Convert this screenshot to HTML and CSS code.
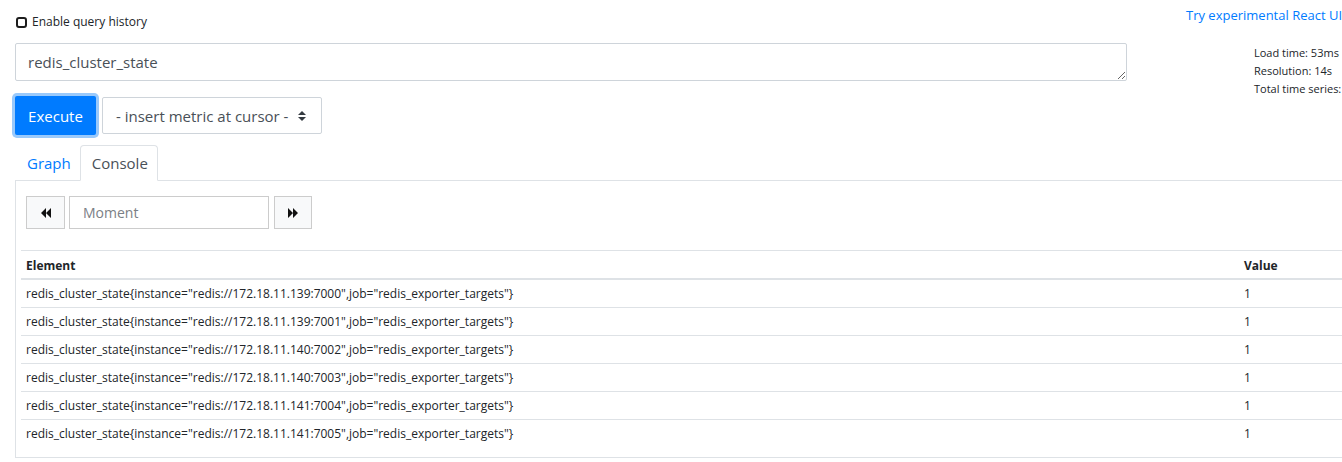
FILE: index.html
```html
<!DOCTYPE html>
<html>
<head>
<meta charset="utf-8">
<link rel="stylesheet" href="styles.css">
</head>
<body>
<div class="page">
  <div class="top">
    <label class="history"><span class="cb"></span>Enable query history</label>
    <a class="react" href="#">Try experimental React UI</a>
  </div>
  <div class="query-row">
    <textarea class="expr">redis_cluster_state</textarea>
    <div class="stats">
      <div>Load time: 53ms</div>
      <div>Resolution: 14s</div>
      <div>Total time series:</div>
    </div>
  </div>
  <div class="exec-row">
    <button class="execute">Execute</button>
    <div class="select">
      <span>- insert metric at cursor -</span>
      <svg class="sel-arrow" width="8" height="10" viewBox="0 0 8 10"><path d="M4 0 L8 4 H0 Z M0 6 H8 L4 10 Z" fill="#343a40"/></svg>
    </div>
  </div>
  <div class="tabs">
    <a class="tab" href="#">Graph</a>
    <a class="tab active" href="#">Console</a>
  </div>
  <div class="pane">
    <div class="controls">
      <button class="nav-btn">
        <svg width="10" height="10" viewBox="0 0 10 10"><path d="M5 0 V10 L0 5 Z M10 0 V10 L5 5 Z" fill="#111"/></svg>
      </button>
      <div class="moment">Moment</div>
      <button class="nav-btn fwd">
        <svg width="10" height="10" viewBox="0 0 10 10"><path d="M0 0 V10 L5 5 Z M5 0 V10 L10 5 Z" fill="#111"/></svg>
      </button>
    </div>
    <table class="results">
      <colgroup><col class="c-el"><col class="c-val"></colgroup>
      <thead><tr><th>Element</th><th>Value</th></tr></thead>
      <tbody>
        <tr><td>redis_cluster_state{instance="redis://172.18.11.139:7000",job="redis_exporter_targets"}</td><td>1</td></tr>
        <tr><td>redis_cluster_state{instance="redis://172.18.11.139:7001",job="redis_exporter_targets"}</td><td>1</td></tr>
        <tr><td>redis_cluster_state{instance="redis://172.18.11.140:7002",job="redis_exporter_targets"}</td><td>1</td></tr>
        <tr><td>redis_cluster_state{instance="redis://172.18.11.140:7003",job="redis_exporter_targets"}</td><td>1</td></tr>
        <tr><td>redis_cluster_state{instance="redis://172.18.11.141:7004",job="redis_exporter_targets"}</td><td>1</td></tr>
        <tr><td>redis_cluster_state{instance="redis://172.18.11.141:7005",job="redis_exporter_targets"}</td><td>1</td></tr>
      </tbody>
    </table>
  </div>
</div>
</body>
</html>
```
FILE: styles.css
```css
html, body {
  margin: 0;
  padding: 0;
  overflow: hidden;
  background: #fff;
}
body {
  font-family: "Open Sans", "Noto Sans", sans-serif;
  color: #212529;
}
.page {
  width: 1400px;
  padding: 0 0 0 15px;
  box-sizing: border-box;
}
.top {
  display: grid;
  grid-template-columns: 1171px auto;
  height: 43px;
}
.history {
  display: flex;
  align-items: center;
  margin-top: 13px;
  height: 18px;
  font-size: 12px;
  line-height: 18px;
  align-self: start;
}
.cb {
  box-sizing: border-box;
  width: 11px;
  height: 11px;
  border: 2px solid #1d1d1d;
  border-radius: 3px;
  margin: 0 5px 0 1px;
}
.react {
  margin-top: 5px;
  font-size: 13px;
  line-height: 21px;
  color: #007bff;
  text-decoration: none;
  white-space: nowrap;
  align-self: start;
}
.query-row {
  display: grid;
  grid-template-columns: 1112px auto;
  column-gap: 127px;
  height: 38px;
  align-items: start;
}
.expr {
  box-sizing: border-box;
  height: 38px;
  margin: 0;
  padding: 7px 12px;
  border: 1px solid #ced4da;
  border-radius: 2px;
  font-family: inherit;
  font-size: 15px;
  line-height: 22px;
  color: #495057;
  resize: vertical;
}
.stats {
  padding-top: 1px;
  font-size: 11px;
  line-height: 18px;
  white-space: nowrap;
}
.exec-row {
  display: flex;
  align-items: center;
  gap: 6px;
  margin-top: 15px;
}
.execute {
  box-sizing: border-box;
  width: 81px;
  height: 39px;
  border: 0;
  border-radius: 2px;
  background: #007bff;
  color: #fff;
  font-family: inherit;
  font-size: 15px;
  box-shadow: 0 0 0 3px #99c9fb;
  padding: 0;
}
.select {
  box-sizing: border-box;
  width: 220px;
  height: 37px;
  border: 1px solid #ced4da;
  border-radius: 2px;
  display: flex;
  align-items: center;
  padding: 0 12px 0 13px;
  gap: 10px;
  font-size: 15px;
  color: #495057;
  white-space: nowrap;
}
.tabs {
  display: flex;
  margin-top: 10px;
  border-bottom: 1px solid #dee2e6;
  width: 1385px;
}
.tab {
  padding: 5px 11px;
  line-height: 24px;
  font-size: 15px;
  border: 1px solid transparent;
  border-radius: 4px 4px 0 0;
  margin-bottom: -1px;
  color: #007bff;
  text-decoration: none;
}
.tab:first-child {
  padding-right: 8px;
}
.tab.active {
  padding-right: 9px;
  color: #495057;
  border-color: #dee2e6 #dee2e6 #fff;
  background: #fff;
}
.pane {
  border-left: 1px solid #dee2e6;
  border-bottom: 1px solid #dee2e6;
  padding: 5px;
  width: 1380px;
  box-sizing: border-box;
}
.controls {
  display: flex;
  margin: 10px 5px 21px;
  height: 33px;
}
.nav-btn {
  box-sizing: border-box;
  width: 39px;
  height: 33px;
  border: 1px solid #ccc;
  background: #f8f9fa;
  border-radius: 0;
  padding: 0;
  display: flex;
  align-items: center;
  justify-content: center;
}
.nav-btn.fwd {
  width: 38px;
  margin-left: 5px;
}
.moment {
  box-sizing: border-box;
  width: 200px;
  height: 33px;
  margin-left: 4px;
  border: 1px solid #ccc;
  padding: 0 13px;
  line-height: 31px;
  font-size: 14px;
  color: #7b8085;
}
.results {
  border-collapse: collapse;
  width: 1360px;
  margin-bottom: 5px;
  font-size: 12px;
}
.c-el { width: 1218px; }
.results th, .results td {
  text-align: left;
  padding: 5px 5px 4px;
  line-height: 18px;
  border-top: 1px solid #dee2e6;
  white-space: nowrap;
}
.results th {
  padding-top: 6px;
  padding-bottom: 3px;
  font-weight: 700;
  border-bottom: 2px solid #dee2e6;
}
.results td {
  color: #212529;
}
```
